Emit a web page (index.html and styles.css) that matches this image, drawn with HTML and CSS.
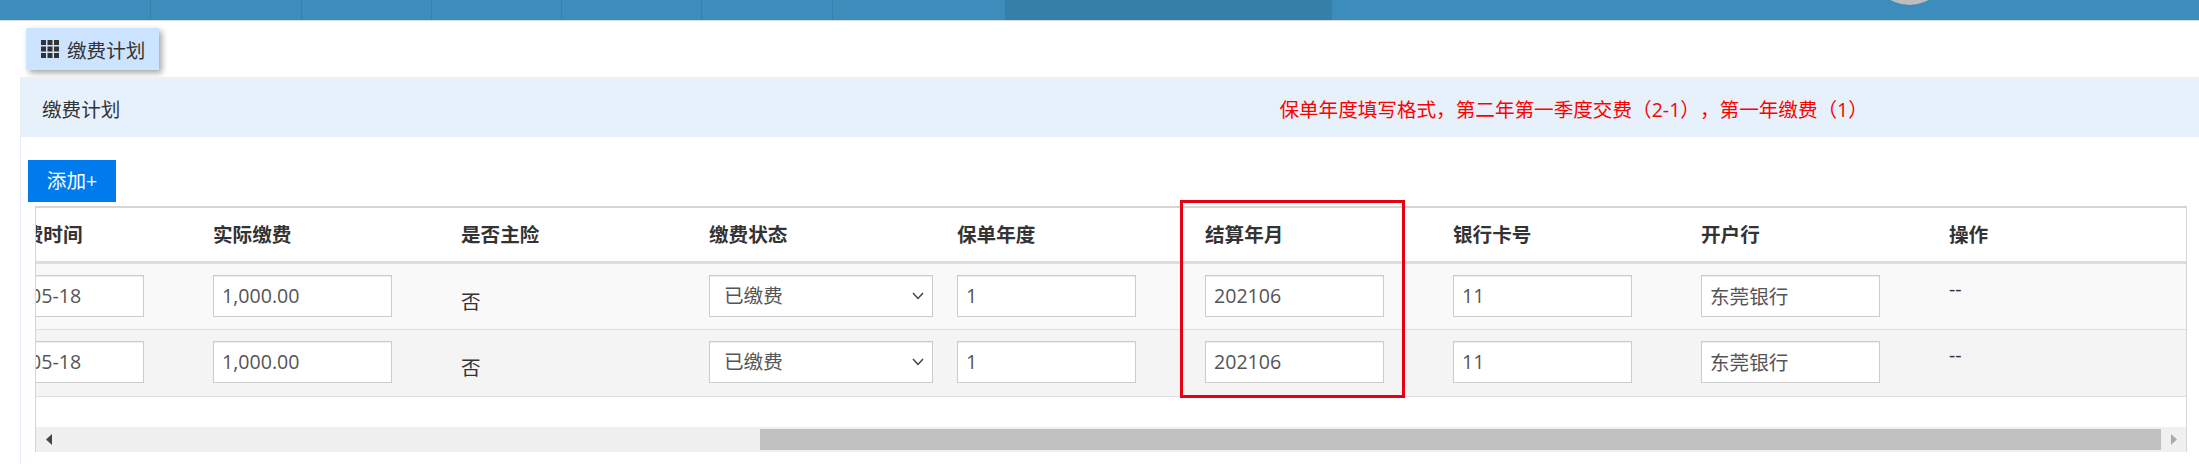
FILE: index.html
```html
<!DOCTYPE html>
<html lang="zh-CN">

<head>
    <meta charset="UTF-8">
    <title>缴费计划</title>
    <link rel="stylesheet" href="styles.css">
</head>

<body>
    <div class="topbar">
        <div class="nav-item w150"></div>
        <div class="nav-item w151"></div>
        <div class="nav-item w130"></div>
        <div class="nav-item w130"></div>
        <div class="nav-item w140"></div>
        <div class="nav-item w131"></div>
        <div class="nav-gap"></div>
        <div class="nav-active"></div>
        <div class="avatar"></div>
    </div>

    <div class="tabs">
        <div class="tab">
            <svg class="tab-icon" width="18" height="18" viewBox="0 0 18 18" fill="#333">
                <rect x="0" y="0" width="5" height="5" /><rect x="6.5" y="0" width="5" height="5" /><rect x="13" y="0" width="5" height="5" />
                <rect x="0" y="6.5" width="5" height="5" /><rect x="6.5" y="6.5" width="5" height="5" /><rect x="13" y="6.5" width="5" height="5" />
                <rect x="0" y="13" width="5" height="5" /><rect x="6.5" y="13" width="5" height="5" /><rect x="13" y="13" width="5" height="5" />
            </svg>
            <span>缴费计划</span>
        </div>
    </div>

    <div class="panel">
        <div class="panel-head">
            <span class="panel-title">缴费计划</span>
            <span class="panel-tip">保单年度填写格式，第二年第一季度交费（2-1），第一年缴费（1）</span>
        </div>

        <button type="button" class="add-btn">添加+</button>

        <div class="table-box">
            <div class="table-clip">
                <table class="plan-table">
                    <thead>
                        <tr>
                            <th>计划缴费时间</th>
                            <th>实际缴费</th>
                            <th>是否主险</th>
                            <th>缴费状态</th>
                            <th>保单年度</th>
                            <th>结算年月</th>
                            <th>银行卡号</th>
                            <th>开户行</th>
                            <th>操作</th>
                        </tr>
                    </thead>
                    <tbody>
                        <tr>
                            <td><input type="text" value="2021-05-18"></td>
                            <td><input type="text" value="1,000.00"></td>
                            <td><span class="plain-cell">否</span></td>
                            <td>
                                <div class="select-wrap">
                                    <select><option>已缴费</option></select>
                                    <svg class="chevron" width="12" height="8" viewBox="0 0 12 8" fill="none" stroke="#444" stroke-width="1.5"><path d="M1 1l5 5.5L11 1" /></svg>
                                </div>
                            </td>
                            <td><input type="text" value="1"></td>
                            <td><input type="text" value="202106"></td>
                            <td><input type="text" value="11"></td>
                            <td><input type="text" value="东莞银行"></td>
                            <td><span class="dash">--</span></td>
                        </tr>
                        <tr>
                            <td><input type="text" value="2021-05-18"></td>
                            <td><input type="text" value="1,000.00"></td>
                            <td><span class="plain-cell">否</span></td>
                            <td>
                                <div class="select-wrap">
                                    <select><option>已缴费</option></select>
                                    <svg class="chevron" width="12" height="8" viewBox="0 0 12 8" fill="none" stroke="#444" stroke-width="1.5"><path d="M1 1l5 5.5L11 1" /></svg>
                                </div>
                            </td>
                            <td><input type="text" value="1"></td>
                            <td><input type="text" value="202106"></td>
                            <td><input type="text" value="11"></td>
                            <td><input type="text" value="东莞银行"></td>
                            <td><span class="dash">--</span></td>
                        </tr>
                    </tbody>
                </table>
            </div>

            <div class="scrollbar">
                <div class="scroll-arrow">
                    <svg width="6" height="11" viewBox="0 0 6 11" fill="#444"><path d="M6 0v11L0 5.5z" /></svg>
                </div>
                <div class="scroll-track">
                    <div class="scroll-thumb"></div>
                </div>
                <div class="scroll-arrow">
                    <svg width="6" height="11" viewBox="0 0 6 11" fill="#aaa"><path d="M0 0v11l6-5.5z" /></svg>
                </div>
            </div>

            <!-- 红框标注 -->
            <div class="mark-box"></div>
        </div>
    </div>
</body>

</html>
```

FILE: styles.css
```css
* {
    margin: 0;
    padding: 0;
    box-sizing: border-box;
    font-family: "Open Sans", "Noto Sans CJK SC", sans-serif;
}

body {
    background: white;
    color: #333;
    font-size: 19.6px;
    overflow: hidden;
}

.topbar {
    position: relative;
    display: flex;
    height: 21px;
    background: #3c8dbc;
    border-bottom: 1px solid #d8dde0;
    overflow: hidden;
}

.nav-item {
    border-right: 1px solid #367fa9;
}

.w150 { width: 151px; }
.w151 { width: 151px; }
.w130 { width: 130px; }
.w140 { width: 140px; }
.w131 { width: 131px; }

.nav-gap {
    width: 172px;
}

.nav-active {
    width: 327px;
    background: #367fa9;
}

.avatar {
    position: absolute;
    left: 1871px;
    top: -72px;
    width: 77px;
    height: 77px;
    border-radius: 50%;
    background: #bdbdbd;
}

.tabs {
    padding: 7px 0 7px 26px;
}

.tab {
    display: flex;
    align-items: center;
    gap: 8px;
    width: 133px;
    height: 42px;
    padding-left: 15px;
    background: #cce4ff;
    box-shadow: 3px 3px 6px rgba(0, 0, 0, 0.35);
}

.panel {
    margin-left: 20px;
    border-top: 2px solid #edf1f6;
    border-left: 1px solid #e6eff8;
    height: 387px;
}

.panel-head {
    position: relative;
    display: flex;
    align-items: center;
    height: 58px;
    padding-left: 21px;
    background: #e6f1fb;
}

.panel-tip {
    margin-left: 1159px;
    color: red;
    white-space: nowrap;
    text-spacing-trim: space-all;
}

.add-btn {
    display: block;
    width: 88px;
    height: 42px;
    margin: 23px 0 0 7px;
    padding-bottom: 3px;
    border: none;
    background: #007bee;
    color: white;
    font-size: 19.6px;
}

.table-box {
    position: relative;
    width: 2152px;
    height: 246px;
    margin: 4px 0 0 14px;
    border: 1px solid #d6d6d6;
    border-top-width: 2px;
}

.table-clip {
    overflow: hidden;
    height: 219px;
}

.plan-table {
    table-layout: fixed;
    width: 2232px;
    margin-left: -82px;
    border-collapse: collapse;
}

.plan-table th {
    height: 54px;
    padding: 0 0 2px 11px;
    font-weight: bold;
    text-align: left;
    border-bottom: 3px solid #ddd;
}

.plan-table td {
    height: 67px;
    padding: 11px 0 0 11px;
    vertical-align: top;
    border-bottom: 1px solid #ddd;
}

.plan-table tbody tr:nth-child(odd) {
    background: #f9f9f9;
}

.plan-table tbody tr:nth-child(even) {
    background: #f4f4f4;
}

input[type="text"],
select {
    display: block;
    width: 179px;
    height: 42px;
    padding: 0 8px;
    border: 1px solid #ccc;
    background: white;
    color: #555;
    font-size: 19.6px;
    box-shadow: inset 0 1px 1px rgba(0, 0, 0, 0.075);
}

.plan-table td:first-child input {
    padding-left: 13px;
}

.select-wrap {
    position: relative;
    width: 224px;
}

select {
    width: 224px;
    padding-left: 14px;
    appearance: none;
}

.chevron {
    position: absolute;
    top: 17px;
    right: 9px;
}

.plain-cell {
    display: block;
    padding-top: 11px;
}

.dash {
    display: block;
    line-height: 28px;
}

.scrollbar {
    display: flex;
    height: 25px;
    background: #f0f0f0;
}

.scroll-arrow {
    display: flex;
    align-items: center;
    justify-content: center;
    width: 25px;
}

.scroll-track {
    flex: 1;
    padding: 2px 0 2px 699px;
}

.scroll-thumb {
    height: 21px;
    background: #c0c0c0;
}

.mark-box {
    position: absolute;
    left: 1144px;
    top: -8px;
    width: 225px;
    height: 198px;
    border: 3px solid #e60012;
}
```
